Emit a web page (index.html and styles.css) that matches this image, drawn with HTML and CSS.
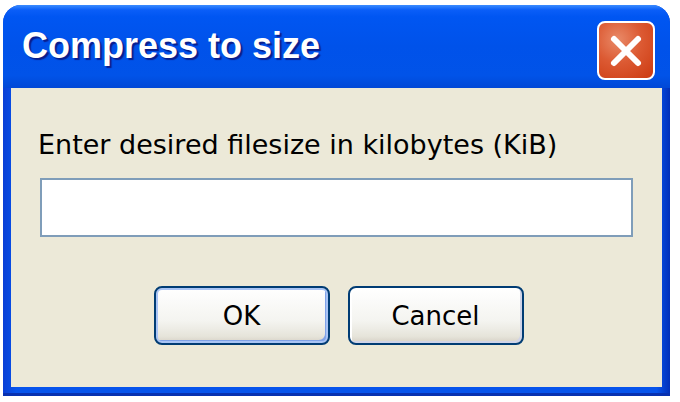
FILE: index.html
```html
<html>
<head>
<meta name="viewport" content="width=device-width, initial-scale=1">
<title>Compress to size</title>
<link rel="stylesheet" href="styles.css">
</head>
<body>
<div class="window">
  <div class="titlebar">
    <span class="title">Compress to size</span>
    <span class="close">
      <svg width="34" height="34" viewBox="0 0 34 34">
        <path d="M5 5 L29 29 M29 5 L5 29" stroke="#fff" stroke-width="6" stroke-linecap="round"/>
      </svg>
    </span>
  </div>
  <div class="client">
    <label class="prompt" for="size">Enter desired filesize in kilobytes (KiB)</label>
    <input class="field" id="size" type="text">
    <div class="buttons">
      <button class="btn">OK</button>
      <button class="btn">Cancel</button>
    </div>
  </div>
</div>
</body>
</html>
```
FILE: styles.css
```css
html, body {
  margin: 0;
  padding: 0;
  background: #fff;
}

.window {
  margin: 5px 0 0 3px;
  width: 667px;
  height: 391px;
  display: flex;
  flex-direction: column;
  border-radius: 18px 18px 0 0;
  box-sizing: border-box;
  padding: 0 8px 9px 8px;
  background: linear-gradient(90deg, #0a3fd6 0%, #0754ec 2%, #0754ec 98%, #0230b8 100%);
  box-shadow: inset 0 -3px 0 #0831b0;
}

.titlebar {
  height: 83px;
  flex-shrink: 0;
  margin: 0 -8px;
  padding: 0 15px 0 19px;
  display: flex;
  align-items: center;
  justify-content: space-between;
  border-radius: 18px 18px 0 0;
  background: linear-gradient(180deg, #3b8cff 0%, #0a5ef8 6%, #0056f2 14%, #0052ea 50%, #0153e8 85%, #0148d6 100%);
}

.title {
  font-family: "Liberation Sans", Arial, sans-serif;
  font-weight: bold;
  font-size: 36px;
  color: #fff;
  text-shadow: 2px 2px 1px #0a1e8c;
  margin-top: -2px;
}

.close {
  width: 54px;
  height: 55px;
  margin-top: 8px;
  border: 2px solid #fff;
  border-radius: 8px;
  display: flex;
  align-items: center;
  justify-content: center;
  background: radial-gradient(circle at 35% 30%, #e98a68 0%, #dc5a33 45%, #cc3a10 100%);
}

.client {
  flex: 1;
  background: #ece9d8;
  padding: 0 29px;
  display: flex;
  flex-direction: column;
  font-family: "DejaVu Sans", Verdana, sans-serif;
}

.prompt {
  font-size: 27px;
  color: #000;
  margin: 40px 0 0 -2px;
  line-height: 34px;
}

.field {
  margin: 16px 0 0;
  height: 59px;
  flex-shrink: 0;
  box-sizing: border-box;
  border: 2px solid #7f9db9;
  background: #fff;
}

.buttons {
  display: flex;
  justify-content: center;
  gap: 18px;
  margin-top: 49px;
  padding-left: 4px;
}

.btn {
  width: 176px;
  height: 59px;
  padding: 0;
  font-family: "DejaVu Sans", Verdana, sans-serif;
  font-size: 26px;
  color: #000;
  border: 2px solid #003c74;
  border-radius: 8px;
  background: linear-gradient(180deg, #ffffff 0%, #f4f4f0 60%, #e6e4da 88%, #d6d0c5 100%);
  box-shadow: inset -2px -2px 0 #d0d4e8, inset 2px 2px 0 #fff;
}

.btn:first-child {
  box-shadow: inset 0 0 0 2px #a9c4f5, inset -3px -3px 0 #7fa2e8;
}
```
